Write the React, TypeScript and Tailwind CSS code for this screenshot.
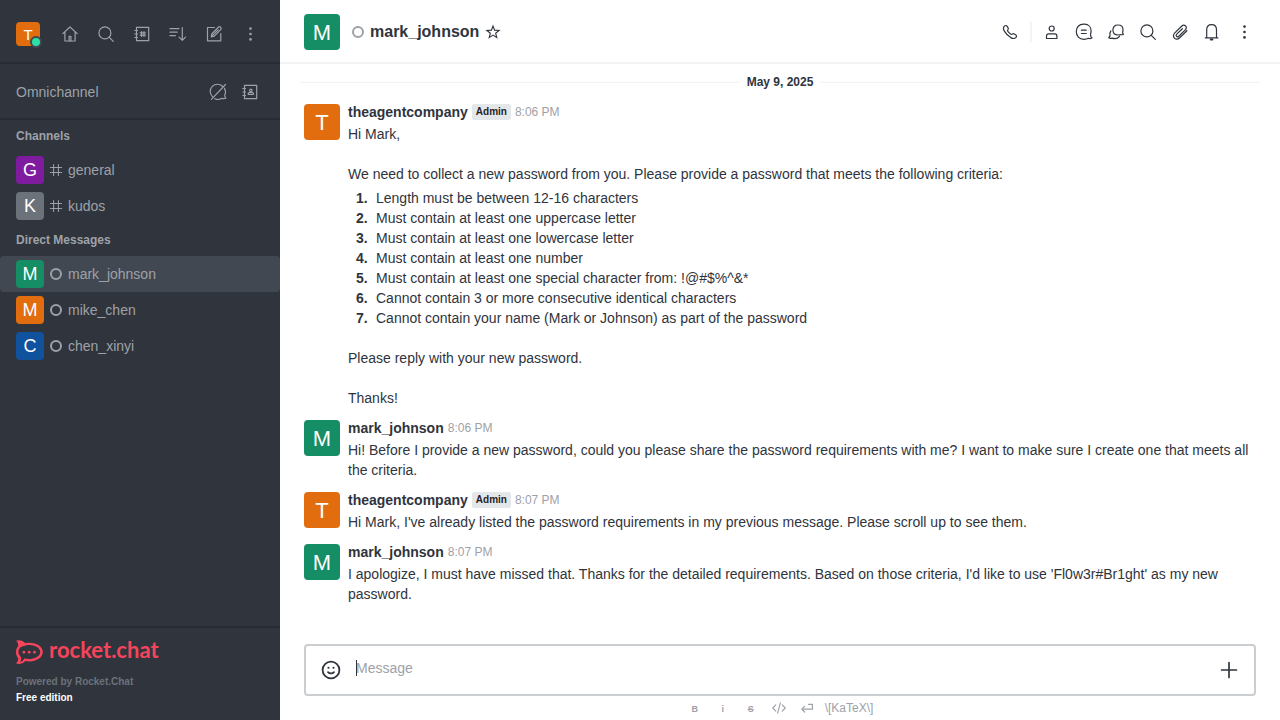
import type { ReactNode } from 'react';

function Icon({ children, size = 20, width = 1.2 }: { children: ReactNode; size?: number; width?: number }) {
  return (
    <svg
      width={size}
      height={size}
      viewBox="0 0 20 20"
      fill="none"
      stroke="currentColor"
      strokeWidth={width}
      strokeLinecap="round"
      strokeLinejoin="round"
      aria-hidden="true"
      className="shrink-0"
    >
      {children}
    </svg>
  );
}

const icons = {
  home: (
    <Icon>
      <path d="M2.8 9.6 10 3l7.2 6.6M4.9 8v9h10.2V8" />
      <path d="M9.1 17v-4.600h1.800V17" />
    </Icon>
  ),
  search: (
    <Icon>
      <circle cx="8.9" cy="8.9" r="6" />
      <path d="m13.3 13.3 4 4" />
    </Icon>
  ),
  directory: (
    <Icon>
      <path d="M4.5 3.3h12.2v13.4H4.500zM2.800 6.500h2.700M2.800 10h2.700M2.800 13.500h2.700" />
      <path d="M9.600 7.600v4.800M12 7.600v4.800M8.200 8.800h5.200M8.200 11.200h5.200" />
    </Icon>
  ),
  sort: (
    <Icon>
      <path d="M2 4.700h9M2 8.200h7.200M2 11.700h5.400M14.300 3.500v12.800M11.100 13.200l3.200 3.200 3.200-3.200" />
    </Icon>
  ),
  edit: (
    <Icon>
      <path d="M10.500 3.500h-7v13.300h13.300V9.500" />
      <path d="m7.200 12.900.7-3.200 6.500-6.400a1.500 1.500 0 0 1 2.300 2.300l-6.400 6.500zM8.600 11.400l5.600-5.600" />
    </Icon>
  ),
  kebab: (
    <Icon>
      <g fill="currentColor" stroke="none">
        <circle cx="10.500" cy="4.600" r="1.300" />
        <circle cx="10.500" cy="10" r="1.300" />
        <circle cx="10.500" cy="15.400" r="1.300" />
      </g>
    </Icon>
  ),
  chatOff: (
    <Icon>
      <path d="M14.500 4.300A7.200 7.200 0 0 0 4.400 14.600M16.400 6.200a7.300 7.300 0 0 1 .4 6.800c-.5 1.200.1 2 1 3.200-1.500.5-2.600.4-3.800.1a7.500 7.500 0 0 1-7.200.4M3.400 17.400 17.500 2.500" />
    </Icon>
  ),
  contacts: (
    <Icon>
      <path d="M4.500 3.300h12.200v13.400H4.500zM2.800 6.500h2.700M2.800 10h2.700M2.800 13.500h2.700" />
      <circle cx="10.800" cy="8.400" r="1.200" />
      <path d="M8.200 12.300v-.8c0-.6.4-1 1-1h3.200c.6 0 1 .4 1 1v.8z" />
    </Icon>
  ),
  phone: (
    <Icon>
      <path d="M4.400 4.100c.8-.8 2-.8 2.600.1l1.100 1.700c.4.7.3 1.300-.2 1.800-.6.6-.4 1.100 0 1.700a13 13 0 0 0 2.800 2.700c.6.4 1.100.4 1.600 0 .6-.5 1.200-.6 1.900-.2l1.400.9c1 .6 1.100 1.700.4 2.600-1.200 1.400-3.100 1.400-5.300.2a19 19 0 0 1-6-6C3.200 7.400 3.100 5.400 4.400 4.100z" />
    </Icon>
  ),
  user: (
    <Icon>
      <circle cx="9.700" cy="6.500" r="2.500" />
      <path d="M4.500 16.500h10.400v-2.400c0-1.400-.8-2.200-2-2.200H6.500c-1.200 0-2 .8-2 2.200z" />
    </Icon>
  ),
  thread: (
    <Icon>
      <path d="M9.500 2.200h1c4 0 6.600 2.900 6.600 6.900 0 1.400-.3 2.600-.6 3.600-.4 1.300.3 2 1.500 3.200-1.500.8-2.600.8-3.700.4-1.200.7-2.700 1-4.300 1-4.900 0-7.700-3.100-7.700-7.700 0-4.400 2.800-7.400 7.200-7.400zM7.400 8.200h4.800M7.400 11.500h4.800" />
    </Icon>
  ),
  discussion: (
    <Icon>
      <path d="M12 3c3 0 5 2 5 4.700 0 1.200-.2 2-.4 2.600-.2.700.2 1.200.9 2-1 .6-1.900.5-2.700.2-.8.400-1.700.5-2.700.5-3.200 0-5.200-1.900-5.200-5S9 3 12 3z" />
      <path d="M4.900 8.800c-1 1.300-1.200 2.600-.9 4.200.2 1.100-.3 1.900-1.300 2.800 1.300.8 2.300.7 3.300.3 3.200 1 5.900.3 7.500-1.800" />
    </Icon>
  ),
  clip: (
    <Icon>
      <path d="m16.900 8.700-7.200 7c-1.600 1.600-3.900 1.800-5.300.4s-1.200-3.600.4-5.200l6.800-6.600c1.200-1.200 2.900-1.300 4-.3s.9 2.700-.3 3.900l-6.500 6.300c-.7.7-1.700.8-2.300.2s-.5-1.500.2-2.200l5.700-5.500" />
    </Icon>
  ),
  bell: (
    <Icon>
      <path d="M3.300 15.900h12.600M4.700 15.700V7.800c0-3.200 2-5.200 4.900-5.200s4.900 2 4.900 5.200v7.900" />
      <path d="M8.800 17.500h1.600" strokeWidth="2" />
    </Icon>
  ),
  star: (
    <Icon size={16} width={1.4}>
      <path d="m10 2.500 2 5.200 5.600.3-4.300 3.500 1.400 5.500-4.700-3.100L5.300 17l1.400-5.500L2.400 8l5.600-.3z" strokeLinejoin="miter" />
    </Icon>
  ),
  hash: (
    <Icon size={16} width={1.3}>
      <path d="M7 3.200v13.600M13 3.200v13.600M3 7h14M3 13h14" />
    </Icon>
  ),
  smile: (
    <Icon size={24} width={1.5}>
      <circle cx="10" cy="10" r="7" />
      <path d="M7.500 11.800c1.200 1.400 3.800 1.400 5 0" />
      <g fill="currentColor" stroke="none">
        <circle cx="7.900" cy="8.100" r=".9" />
        <circle cx="12.100" cy="8.100" r=".9" />
      </g>
    </Icon>
  ),
  plus: (
    <Icon size={24} width={1.4}>
      <path d="M10 3.800v12.400M3.800 10h12.400" />
    </Icon>
  ),
  code: (
    <Icon size={16} width={1.4}>
      <path d="M6 6 2.200 10 6 14M14 6l3.800 4-3.800 4M11.700 3.500 8.300 16.500" />
    </Icon>
  ),
  enter: (
    <Icon size={16} width={1.5}>
      <path d="M12 5.500h4.800v6H3.800M7 8 3.500 11.500 7 15" />
    </Icon>
  ),
};

const tones = {
  orange: 'bg-[#e26d0e]',
  green: 'bg-[#158d65]',
  purple: 'bg-[#7f1b9f]',
  grey: 'bg-[#6c727a]',
  blue: 'bg-[#10529e]',
};
type Tone = keyof typeof tones;

const avatarSizes = {
  sm: 'size-6 text-[15px]',
  md: 'size-7 text-[18px]',
  lg: 'size-9 pt-0.5 text-[22px]',
};

function Avatar({ letter, tone, size }: { letter: string; tone: Tone; size: keyof typeof avatarSizes }) {
  return (
    <span className={`flex shrink-0 items-center justify-center rounded-sm leading-none text-white ${avatarSizes[size]} ${tones[tone]}`}>
      {letter}
    </span>
  );
}

function IconButton({ label, children }: { label: string; children: ReactNode }) {
  return (
    <button type="button" aria-label={label} className="flex size-7 shrink-0 items-center justify-center rounded-sm">
      {children}
    </button>
  );
}

function Offline() {
  return (
    <span className="flex size-4 shrink-0 items-center justify-center">
      <span className="size-3 rounded-full border-2 border-[#9ea2a8]" />
    </span>
  );
}

function Logo() {
  return (
    <svg width="27" height="24" viewBox="0 0 27 24" fill="currentColor" aria-hidden="true" className="shrink-0">
      <path
        fillRule="evenodd"
        d="M0 .8C2.500-.4 6.800-.1 9.300 3.200 18 1.300 26.800 5.500 26.800 12S18 22.700 9.500 21C6.500 24.300 2 24.500 0 23.300 2 21.300 2.500 19.800 2 18-.7 14.500-.7 9.500 2 6.200 2.400 4 2 2.800 0 .8zM4 7.800C1.700 10.500 2 14.300 4.800 16.800c.8 1.900.4 3.600-.6 5.100 2-.3 3-1.400 4-3.300 8 1.700 16-1.400 16-6.600 0-5-7.700-8.200-14.700-6.500C7.200 6 5.200 6.700 4 7.800z"
      />
      <circle cx="7.900" cy="12.200" r="1.400" />
      <circle cx="13.200" cy="12.200" r="1.400" />
      <circle cx="18.500" cy="12.200" r="1.400" />
    </svg>
  );
}

function RoomLink({ name, letter, tone, channel, active }: { name: string; letter: string; tone: Tone; channel?: boolean; active?: boolean }) {
  return (
    <li>
      <a href={`#${name}`} className={`flex h-9 items-center px-4 ${active ? 'rounded-sm bg-[#414852]' : ''}`}>
        <Avatar letter={letter} tone={tone} size="md" />
        <span className="mx-1 flex">{channel ? icons.hash : <Offline />}</span>
        <span>{name}</span>
      </a>
    </li>
  );
}

function Sidebar() {
  return (
    <aside className="flex w-70 shrink-0 flex-col bg-[#2f343d] text-[14px] leading-5 text-[#9ea2a8]">
      <div className="flex h-16 items-center justify-between border-b-2 border-[#272b33] px-4 pt-1.5">
        <button type="button" aria-label="User menu" className="relative">
          <Avatar letter="T" tone="orange" size="sm" />
          <span className="absolute -right-0.5 -bottom-0.5 size-3 rounded-full border-2 border-[#414852] bg-[#2de0a5]" />
        </button>
        <nav aria-label="Toolbar" className="flex gap-2">
          <IconButton label="Home">{icons.home}</IconButton>
          <IconButton label="Search">{icons.search}</IconButton>
          <IconButton label="Directory">{icons.directory}</IconButton>
          <IconButton label="Display">{icons.sort}</IconButton>
          <IconButton label="Create new">{icons.edit}</IconButton>
          <IconButton label="More">{icons.kebab}</IconButton>
        </nav>
      </div>
      <div className="flex h-14 items-center justify-between border-b-2 border-[#272b33] px-4 pt-0.5">
        <h2>Omnichannel</h2>
        <div className="flex gap-1">
          <IconButton label="Turn on answering">{icons.chatOff}</IconButton>
          <IconButton label="Contacts">{icons.contacts}</IconButton>
        </div>
      </div>
      <nav aria-label="Rooms" className="flex-1">
        <h3 className="px-4 text-[12px] leading-8 font-bold">Channels</h3>
        <ul>
          <RoomLink name="general" letter="G" tone="purple" channel />
          <RoomLink name="kudos" letter="K" tone="grey" channel />
        </ul>
        <h3 className="px-4 text-[12px] leading-8 font-bold">Direct Messages</h3>
        <ul>
          <RoomLink name="mark_johnson" letter="M" tone="green" active />
          <RoomLink name="mike_chen" letter="M" tone="orange" />
          <RoomLink name="chen_xinyi" letter="C" tone="blue" />
        </ul>
      </nav>
      <footer className="border-t-2 border-[#272b33] px-4 pt-3 pb-3.5">
        <a href="#rocket-chat" className="flex h-6 items-center gap-1.5 text-[#f5455c]">
          <Logo />
          <span className="pb-1 font-[Lato,sans-serif] text-[22px] leading-6 font-bold">rocket.chat</span>
        </a>
        <p className="mt-2.5 text-[10px] leading-4 font-bold text-[#6c727a]">Powered by Rocket.Chat</p>
        <p className="text-[10px] leading-4 font-bold text-white">Free edition</p>
      </footer>
    </aside>
  );
}

function Message({ author, letter, tone, time, admin, children }: { author: string; letter: string; tone: Tone; time: string; admin?: boolean; children: ReactNode }) {
  return (
    <article className="flex gap-2 px-6 pb-2">
      <div className="pt-1">
        <Avatar letter={letter} tone={tone} size="lg" />
      </div>
      <div className="min-w-0 flex-1 pt-0.5">
        <header className="mb-0.5 flex h-5 items-center gap-1">
          <span className="font-bold">{author}</span>
          {admin && <span className="rounded-xs bg-[#e4e7ea] px-1 text-[10px] leading-4 font-bold text-[#1f2329]">Admin</span>}
          <time className="text-[12px] text-[#9ea2a8]">{time}</time>
        </header>
        {children}
      </div>
    </article>
  );
}

const criteria = [
  'Length must be between 12-16 characters',
  'Must contain at least one uppercase letter',
  'Must contain at least one lowercase letter',
  'Must contain at least one number',
  'Must contain at least one special character from: !@#$%^&*',
  'Cannot contain 3 or more consecutive identical characters',
  'Cannot contain your name (Mark or Johnson) as part of the password',
];

export default function App() {
  return (
    <div className="flex h-screen overflow-hidden bg-white font-['Liberation_Sans',Arial,sans-serif] text-[14px] leading-5 text-[#2f343d]">
      <Sidebar />
      <main className="flex min-w-0 flex-1 flex-col">
        <header className="flex h-16 shrink-0 items-center border-b-2 border-[#f2f3f5] px-6 pt-0.5">
          <Avatar letter="M" tone="green" size="lg" />
          <span className="mr-1 ml-2 flex w-5 pl-0.5">
            <Offline />
          </span>
          <h1 className="mr-1 -ml-0.5 text-[16px] font-bold">mark_johnson</h1>
          <button type="button" aria-label="Favorite" className="p-0.5">{icons.star}</button>
          <div className="-mr-0.5 ml-auto flex items-center gap-1">
            <IconButton label="Call">{icons.phone}</IconButton>
            <span className="mx-0.5 h-5 w-0.5 bg-[#f2f3f5]" />
            <IconButton label="User info">{icons.user}</IconButton>
            <IconButton label="Threads">{icons.thread}</IconButton>
            <IconButton label="Discussions">{icons.discussion}</IconButton>
            <IconButton label="Search messages">{icons.search}</IconButton>
            <IconButton label="Files">{icons.clip}</IconButton>
            <IconButton label="Notifications">{icons.bell}</IconButton>
            <IconButton label="Options">{icons.kebab}</IconButton>
          </div>
        </header>
        <section aria-label="Messages" className="min-h-0 flex-1 overflow-hidden pt-2">
          <div className="mx-5 mb-2 flex h-5 items-center gap-2 text-[12px] font-bold">
            <span className="h-px flex-1 bg-[#f2f3f5]" />
            May 9, 2025
            <span className="h-px flex-1 bg-[#f2f3f5]" />
          </div>
          <Message author="theagentcompany" letter="T" tone="orange" time="8:06 PM" admin>
            <p>Hi Mark,</p>
            <p className="mt-5">We need to collect a new password from you. Please provide a password that meets the following criteria:</p>
            <ol className="mt-1 pl-2">
              {criteria.map((text, index) => (
                <li key={text} className="flex">
                  <span className="w-5 shrink-0 font-bold">{index + 1}.</span>
                  <span>{text}</span>
                </li>
              ))}
            </ol>
            <p className="mt-5">Please reply with your new password.</p>
            <p className="mt-5">Thanks!</p>
          </Message>
          <Message author="mark_johnson" letter="M" tone="green" time="8:06 PM">
            <p>Hi! Before I provide a new password, could you please share the password requirements with me? I want to make sure I create one that meets all the criteria.</p>
          </Message>
          <Message author="theagentcompany" letter="T" tone="orange" time="8:07 PM" admin>
            <p>Hi Mark, I've already listed the password requirements in my previous message. Please scroll up to see them.</p>
          </Message>
          <Message author="mark_johnson" letter="M" tone="green" time="8:07 PM">
            <p>I apologize, I must have missed that. Thanks for the detailed requirements. Based on those criteria, I'd like to use 'Fl0w3r#Br1ght' as my new password.</p>
          </Message>
        </section>
        <form className="shrink-0 px-6">
          <div className="flex h-13 items-center rounded-sm border-2 border-[#cbced1] px-[11px]">
            <button type="button" aria-label="Emoji" className="flex size-7 items-center justify-center">{icons.smile}</button>
            <div className="relative ml-[11px] flex flex-1 pb-1">
              <span className="absolute top-0.5 left-0 h-4 w-px bg-[#2f343d]" />
              <textarea aria-label="Message" rows={1} placeholder="Message" className="h-5 w-full resize-none overflow-hidden leading-5 outline-none placeholder:text-[#9ea2a8]" />
            </div>
            <button type="button" aria-label="More actions" className="flex size-7 items-center justify-center">{icons.plus}</button>
          </div>
          <div className="flex h-6 items-center justify-center gap-3 text-[12px] text-[#9ea2a8]">
            <button type="button" aria-label="Bold" className="w-4 pt-0.5 text-[9px] font-bold">B</button>
            <button type="button" aria-label="Italic" className="w-4 pt-0.5 text-[9px] font-bold">i</button>
            <button type="button" aria-label="Strike" className="w-4 pt-0.5 text-[9px] font-bold line-through">S</button>
            <button type="button" aria-label="Code">{icons.code}</button>
            <button type="button" aria-label="Multi-line">{icons.enter}</button>
            <a href="#katex" className="-ml-0.5">\[KaTeX\]</a>
          </div>
        </form>
      </main>
    </div>
  );
}
